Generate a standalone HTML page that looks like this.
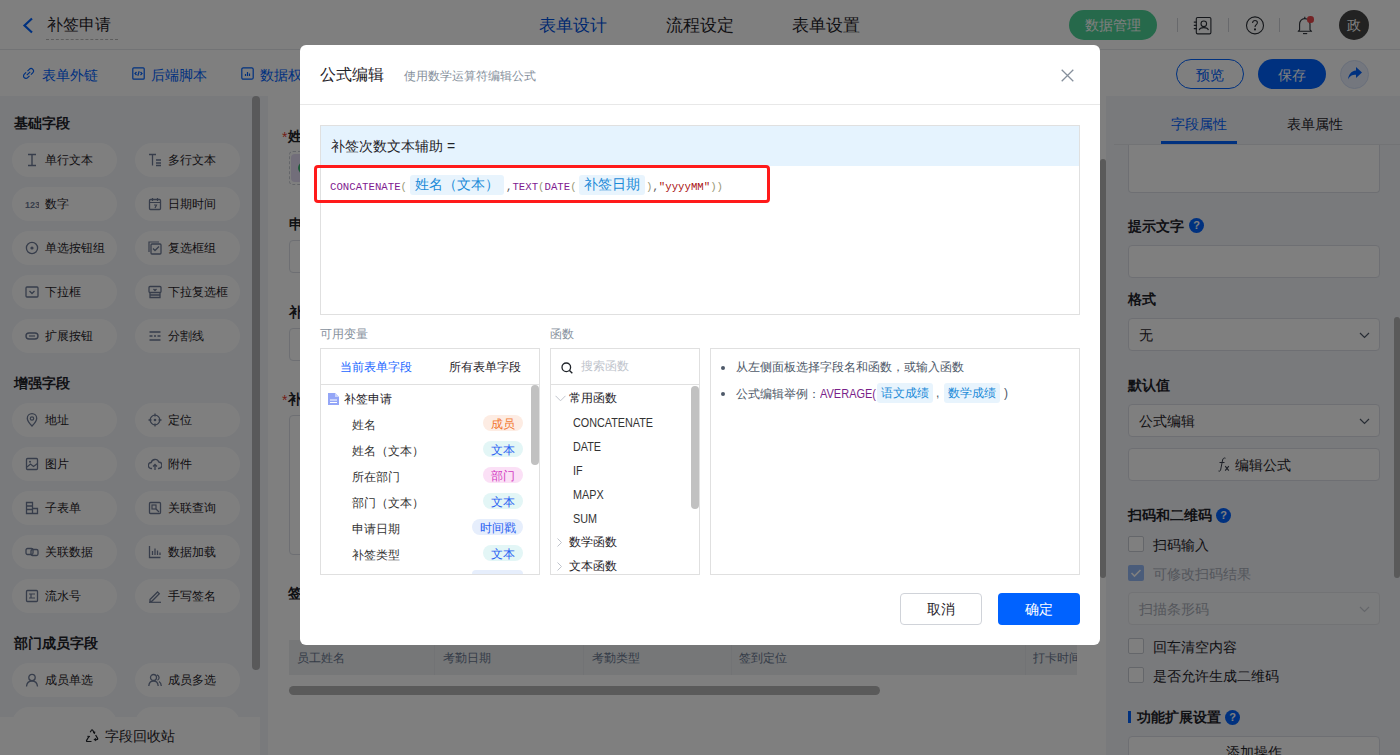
<!DOCTYPE html>
<html><head><meta charset="utf-8">
<style>
*{box-sizing:border-box;margin:0;padding:0}
html,body{width:1400px;height:755px;overflow:hidden;background:#fff;font-family:"Liberation Sans",sans-serif;color:#1f2329}
.a{position:absolute}
.t{position:absolute;white-space:nowrap;line-height:1}
#top{left:0;top:0;width:1400px;height:50px;background:#fff;border-bottom:1px solid #e5e6eb}
#bar{left:0;top:50px;width:1400px;height:46px;background:#fff}
#left{left:0;top:96px;width:268px;height:659px;background:#f2f4f9}
#mid{left:268px;top:96px;width:838px;height:659px;background:#fff}
#right{left:1106px;top:96px;width:294px;height:659px;background:#f2f4f9}
.pill{position:absolute;width:105px;height:34px;border-radius:17px;background:#fff}
.pill span{position:absolute;left:33px;top:10px;font-size:12px;line-height:14px;color:#1f2329}
.pill i{position:absolute;left:12px;top:10px;width:14px;height:14px}
.sec{position:absolute;left:14px;font-size:14px;font-weight:bold;line-height:14px}
#mask{left:0;top:0;width:1400px;height:755px;background:rgba(0,0,0,0.5)}
#modal{left:300px;top:45px;width:800px;height:600px;background:#fff;border-radius:6px}
.code{font-family:"Liberation Mono",monospace;font-size:11.5px;line-height:11px;margin-top:1px;transform:scaleX(0.93);transform-origin:0 0}
.kw{color:#7f1a90}.br{color:#999977}.st{color:#aa1111}.pu{color:#555}
</style></head><body>
<!-- top bar -->
<div id="top" class="a"></div>
<svg class="a" style="left:22px;top:17px" width="12" height="17" viewBox="0 0 12 17"><path d="M10 1.5 L2.5 8.5 L10 15.5" fill="none" stroke="#0062ff" stroke-width="2.2"/></svg>
<div class="t" style="left:47px;top:17px;font-size:16px;color:#1f2329">补签申请</div>
<div class="a" style="left:46px;top:39px;width:72px;border-top:1px dashed #bbb"></div>
<div class="t" style="left:539px;top:18px;font-size:16.6px;color:#0052e0">表单设计</div>
<div class="t" style="left:666px;top:18px;font-size:16.6px">流程设定</div>
<div class="t" style="left:792px;top:18px;font-size:16.6px">表单设置</div>
<div class="a" style="left:1069px;top:10px;width:88px;height:30px;border-radius:15px;background:#4cd296"></div>
<div class="t" style="left:1085px;top:18px;font-size:14px;color:#fff">数据管理</div>
<!-- right header icons -->
<div class="a" style="left:1177px;top:18px;width:1px;height:14px;background:#d0d3d9"></div>
<div class="a" style="left:1228px;top:18px;width:1px;height:14px;background:#d0d3d9"></div>
<div class="a" style="left:1279px;top:18px;width:1px;height:14px;background:#d0d3d9"></div>
<svg class="a" style="left:1192px;top:15px" width="22" height="22" viewBox="0 0 22 22" fill="none" stroke="#2b2f36" stroke-width="1.1"><rect x="4.3" y="2.5" width="14.6" height="16.4" rx="1.3"/><circle cx="11.8" cy="8.8" r="2.8"/><path d="M7.2 15.2 C7.8 11.8 15.8 11.8 16.4 15.2"/><path d="M1.8 7.1h3.2M1.8 10.4h3.2M1.8 13.6h3.2"/></svg>
<svg class="a" style="left:1245px;top:15px" width="20" height="21" viewBox="0 0 20 21" fill="none" stroke="#2b2f36" stroke-width="1.1"><circle cx="10" cy="10.4" r="8.5"/><path d="M7.6 8 C7.6 6.4 8.7 5.5 10 5.5 C11.4 5.5 12.4 6.5 12.4 7.7 C12.4 9.5 10 9.7 10 11.9"/><circle cx="10" cy="14.4" r="0.5" fill="#2b2f36"/></svg>
<svg class="a" style="left:1296px;top:15px" width="18" height="21" viewBox="0 0 18 21" fill="none" stroke="#2b2f36" stroke-width="1.1"><path d="M2.2 16.3 L3.6 14.8 V9.3 C3.6 6 5.9 3.6 8.8 3.6 C11.7 3.6 14 6 14 9.3 V14.8 L15.6 16.3 Z" stroke-linejoin="round"/><path d="M7 18.6 H11.2"/><path d="M8.8 1.8 V3.6"/></svg>
<div class="a" style="left:1307px;top:16px;width:6.5px;height:6.5px;border-radius:50%;background:#e8474a"></div>
<div class="a" style="left:1339px;top:10px;width:30px;height:30px;border-radius:50%;background:#444"></div>
<div class="t" style="left:1347px;top:18px;font-size:14px;color:#fff">政</div>

<div id="bar" class="a"></div>
<svg class="a" style="left:22px;top:67px" width="13" height="13" viewBox="0 0 13 13" fill="none" stroke="#0062ff" stroke-width="1.2"><path d="M5.5 4.2 L7.3 2.4 C8.3 1.4 9.9 1.4 10.8 2.3 C11.7 3.2 11.7 4.8 10.7 5.8 L8.9 7.6"/><path d="M7.5 8.8 L5.7 10.6 C4.7 11.6 3.1 11.6 2.2 10.7 C1.3 9.8 1.3 8.2 2.3 7.2 L4.1 5.4"/><path d="M4.8 8.2 L8.2 4.8"/></svg>
<div class="t" style="left:42px;top:68px;font-size:14px;color:#0062ff">表单外链</div>
<svg class="a" style="left:132px;top:67px" width="13" height="13" viewBox="0 0 13 13" fill="none" stroke="#0062ff" stroke-width="1.2"><rect x="0.8" y="0.8" width="11.4" height="11.4" rx="1"/><path d="M4.5 5 L3 6.5 L4.5 8 M8.5 5 L10 6.5 L8.5 8 M7.2 4.3 L5.8 8.7"/></svg>
<div class="t" style="left:151px;top:68px;font-size:14px;color:#0062ff">后端脚本</div>
<svg class="a" style="left:241px;top:67px" width="13" height="13" viewBox="0 0 13 13" fill="none" stroke="#0062ff" stroke-width="1.2"><rect x="0.8" y="0.8" width="11.4" height="11.4" rx="1.5"/><path d="M4.5 9 V7 M6.5 9 V5 M8.5 9 V6.5"/></svg>
<div class="t" style="left:260px;top:68px;font-size:14px;color:#0062ff">数据权限</div>
<div class="a" style="left:1176px;top:59px;width:68px;height:30px;border-radius:15px;border:1px solid #0062ff;background:#fff"></div>
<div class="t" style="left:1196px;top:68px;font-size:14px;color:#0062ff">预览</div>
<div class="a" style="left:1258px;top:59px;width:68px;height:30px;border-radius:15px;background:#0062ff"></div>
<div class="t" style="left:1278px;top:68px;font-size:14px;color:#fff">保存</div>
<div class="a" style="left:1340px;top:60px;width:29px;height:29px;border-radius:50%;background:#e8effc;border:1px solid #d3def5"></div>
<svg class="a" style="left:1347px;top:66px" width="16" height="15" viewBox="0 0 16 15"><path d="M9 1 L15 6.5 L9 12 V8.8 C5 8.8 2.8 10 1 13.5 C1.5 8.5 4 5 9 4.4 Z" fill="#0062ff"/></svg>

<div id="left" class="a"></div>
<div class="sec" style="top:116px">基础字段</div>
<div class="sec" style="top:376px">增强字段</div>
<div class="sec" style="top:636px">部门成员字段</div>
<div class="pill" style="left:12px;top:143px"><svg class="a" style="left:13px;top:10px" width="14" height="14" viewBox="0 0 14 14"><path d="M3 1.5h8M7 1.5v11M3 12.5h8" stroke="#6e7b96" stroke-width="1.4" fill="none"/></svg><span>单行文本</span></div>
<div class="pill" style="left:135px;top:143px"><svg class="a" style="left:13px;top:10px" width="14" height="14" viewBox="0 0 14 14"><path d="M1 1.5h7M4.5 1.5v11M8 7h5M8 10h5M8 12.5h5" stroke="#6e7b96" stroke-width="1.3" fill="none"/></svg><span>多行文本</span></div>
<div class="pill" style="left:12px;top:187px"><svg class="a" style="left:13px;top:10px" width="14" height="14" viewBox="0 0 14 14"><text x="0" y="11" font-size="9" font-weight="bold" fill="#6e7b96" font-family="Liberation Sans">123</text></svg><span>数字</span></div>
<div class="pill" style="left:135px;top:187px"><svg class="a" style="left:13px;top:10px" width="14" height="14" viewBox="0 0 14 14"><rect x="1.5" y="2.5" width="11" height="10" rx="1" stroke="#6e7b96" stroke-width="1.3" fill="none"/><path d="M1.5 5.5h11M4.5 1v3M9.5 1v3M6 8h2.5L7 11" stroke="#6e7b96" stroke-width="1.2" fill="none"/></svg><span>日期时间</span></div>
<div class="pill" style="left:12px;top:231px"><svg class="a" style="left:13px;top:10px" width="14" height="14" viewBox="0 0 14 14"><circle cx="7" cy="7" r="5.6" stroke="#6e7b96" stroke-width="1.3" fill="none"/><circle cx="7" cy="7" r="1.6" fill="#6e7b96"/></svg><span>单选按钮组</span></div>
<div class="pill" style="left:135px;top:231px"><svg class="a" style="left:13px;top:10px" width="14" height="14" viewBox="0 0 14 14"><path d="M1 11V1h10" stroke="#6e7b96" stroke-width="1.2" fill="none"/><rect x="3" y="3" width="10" height="10" rx="1" stroke="#6e7b96" stroke-width="1.3" fill="none"/><path d="M5 7.5l2 2 4-4" stroke="#6e7b96" stroke-width="1.3" fill="none"/></svg><span>复选框组</span></div>
<div class="pill" style="left:12px;top:275px"><svg class="a" style="left:13px;top:10px" width="14" height="14" viewBox="0 0 14 14"><rect x="1" y="2" width="12" height="10" rx="1" stroke="#6e7b96" stroke-width="1.3" fill="none"/><path d="M4.5 6l2.5 2.5L9.5 6" stroke="#6e7b96" stroke-width="1.3" fill="none"/></svg><span>下拉框</span></div>
<div class="pill" style="left:135px;top:275px"><svg class="a" style="left:13px;top:10px" width="14" height="14" viewBox="0 0 14 14"><rect x="1" y="1.5" width="12" height="6" rx="1" stroke="#6e7b96" stroke-width="1.3" fill="none"/><path d="M2 7.5v5h10v-5M2 10h10M5.5 4l1.5 1.5L8.5 4" stroke="#6e7b96" stroke-width="1.3" fill="none"/></svg><span>下拉复选框</span></div>
<div class="pill" style="left:12px;top:319px"><svg class="a" style="left:13px;top:10px" width="14" height="14" viewBox="0 0 14 14"><rect x="1" y="4" width="12" height="6" rx="3" stroke="#6e7b96" stroke-width="1.4" fill="none"/><path d="M4 7h6" stroke="#6e7b96" stroke-width="1.2"/></svg><span>扩展按钮</span></div>
<div class="pill" style="left:135px;top:319px"><svg class="a" style="left:13px;top:10px" width="14" height="14" viewBox="0 0 14 14"><path d="M1.5 3h11M1.5 7h3M6 7h2M9.5 7h3M1.5 11h11" stroke="#6e7b96" stroke-width="1.3" fill="none"/></svg><span>分割线</span></div>
<div class="pill" style="left:12px;top:403px"><svg class="a" style="left:13px;top:10px" width="14" height="14" viewBox="0 0 14 14"><path d="M7 13C4 9.8 2.3 7.6 2.3 5.4A4.7 4.7 0 0 1 11.7 5.4C11.7 7.6 10 9.8 7 13Z" stroke="#6e7b96" stroke-width="1.3" fill="none"/><circle cx="7" cy="5.5" r="1.7" stroke="#6e7b96" stroke-width="1.2" fill="none"/></svg><span>地址</span></div>
<div class="pill" style="left:135px;top:403px"><svg class="a" style="left:13px;top:10px" width="14" height="14" viewBox="0 0 14 14"><circle cx="7" cy="7" r="4.8" stroke="#6e7b96" stroke-width="1.3" fill="none"/><circle cx="7" cy="7" r="1.3" fill="#6e7b96"/><path d="M7 0.5v3M7 10.5v3M0.5 7h3M10.5 7h3" stroke="#6e7b96" stroke-width="1.3"/></svg><span>定位</span></div>
<div class="pill" style="left:12px;top:447px"><svg class="a" style="left:13px;top:10px" width="14" height="14" viewBox="0 0 14 14"><rect x="1.5" y="1.5" width="11" height="11" rx="1" stroke="#6e7b96" stroke-width="1.3" fill="none"/><path d="M2 10l3.5-3 3 2.5 4-3" stroke="#6e7b96" stroke-width="1.2" fill="none"/><circle cx="5" cy="4.8" r="1" fill="#6e7b96"/></svg><span>图片</span></div>
<div class="pill" style="left:135px;top:447px"><svg class="a" style="left:13px;top:10px" width="14" height="14" viewBox="0 0 14 14"><path d="M4 11.5H3.5A3 3 0 0 1 3.2 5.5 4 4 0 0 1 10.8 5 3 3 0 0 1 10.5 11.5H10" stroke="#6e7b96" stroke-width="1.3" fill="none"/><path d="M7 13V7.5M5 9.5l2-2 2 2" stroke="#6e7b96" stroke-width="1.3" fill="none"/></svg><span>附件</span></div>
<div class="pill" style="left:12px;top:491px"><svg class="a" style="left:13px;top:10px" width="14" height="14" viewBox="0 0 14 14"><path d="M1.5 1.5h6v11h-6zM1.5 5h6M1.5 8.5h6M7.5 7.5h5v5h-5" stroke="#6e7b96" stroke-width="1.3" fill="none"/></svg><span>子表单</span></div>
<div class="pill" style="left:135px;top:491px"><svg class="a" style="left:13px;top:10px" width="14" height="14" viewBox="0 0 14 14"><rect x="1.5" y="1.5" width="11" height="11" rx="1" stroke="#6e7b96" stroke-width="1.3" fill="none"/><rect x="4" y="4" width="4" height="4" stroke="#6e7b96" stroke-width="1.2" fill="none"/><path d="M8 8l3 3" stroke="#6e7b96" stroke-width="1.3"/></svg><span>关联查询</span></div>
<div class="pill" style="left:12px;top:535px"><svg class="a" style="left:13px;top:10px" width="14" height="14" viewBox="0 0 14 14"><rect x="1" y="3.5" width="7" height="6" rx="1.5" stroke="#6e7b96" stroke-width="1.3" fill="none"/><rect x="6" y="4.5" width="7" height="6" rx="1.5" stroke="#6e7b96" stroke-width="1.3" fill="none"/></svg><span>关联数据</span></div>
<div class="pill" style="left:135px;top:535px"><svg class="a" style="left:13px;top:10px" width="14" height="14" viewBox="0 0 14 14"><path d="M1.5 1v11.5h11M4.5 10V6M7 10V3.5M9.5 10V5.5M12 10V7.5" stroke="#6e7b96" stroke-width="1.3" fill="none"/></svg><span>数据加载</span></div>
<div class="pill" style="left:12px;top:579px"><svg class="a" style="left:13px;top:10px" width="14" height="14" viewBox="0 0 14 14"><rect x="1.5" y="1.5" width="11" height="11" rx="1" stroke="#6e7b96" stroke-width="1.3" fill="none"/><path d="M4 5h6M4 9h6M6 5v4" stroke="#6e7b96" stroke-width="1.2" fill="none"/></svg><span>流水号</span></div>
<div class="pill" style="left:135px;top:579px"><svg class="a" style="left:13px;top:10px" width="14" height="14" viewBox="0 0 14 14"><path d="M2 10.5L9.5 3l1.8 1.8L3.8 12.3H2z" stroke="#6e7b96" stroke-width="1.3" fill="none"/><path d="M1 13.3h12" stroke="#6e7b96" stroke-width="1.2"/></svg><span>手写签名</span></div>
<div class="pill" style="left:12px;top:663px"><svg class="a" style="left:13px;top:10px" width="14" height="14" viewBox="0 0 14 14"><circle cx="7" cy="4.5" r="3.2" stroke="#6e7b96" stroke-width="1.3" fill="none"/><path d="M1.5 13.5C1.8 9.8 4 8 7 8s5.2 1.8 5.5 5.5" stroke="#6e7b96" stroke-width="1.3" fill="none"/></svg><span>成员单选</span></div>
<div class="pill" style="left:135px;top:663px"><svg class="a" style="left:13px;top:10px" width="14" height="14" viewBox="0 0 14 14"><circle cx="5.5" cy="4.5" r="3" stroke="#6e7b96" stroke-width="1.3" fill="none"/><path d="M0.8 13C1 9.8 3 8 5.5 8S10 9.8 10.2 13M9 1.8A3 3 0 0 1 9.5 7.3M11 8.5C12.3 9.3 13.2 10.8 13.3 13" stroke="#6e7b96" stroke-width="1.3" fill="none"/></svg><span>成员多选</span></div>
<div class="pill" style="left:12px;top:707px"><svg class="a" style="left:13px;top:10px" width="14" height="14" viewBox="0 0 14 14"><circle cx="7" cy="4.5" r="3.2" stroke="#6e7b96" stroke-width="1.3" fill="none"/><path d="M1.5 13.5C1.8 9.8 4 8 7 8s5.2 1.8 5.5 5.5" stroke="#6e7b96" stroke-width="1.3" fill="none"/></svg><span>部门单选</span></div>
<div class="pill" style="left:135px;top:707px"><svg class="a" style="left:13px;top:10px" width="14" height="14" viewBox="0 0 14 14"><circle cx="5.5" cy="4.5" r="3" stroke="#6e7b96" stroke-width="1.3" fill="none"/><path d="M0.8 13C1 9.8 3 8 5.5 8S10 9.8 10.2 13M9 1.8A3 3 0 0 1 9.5 7.3M11 8.5C12.3 9.3 13.2 10.8 13.3 13" stroke="#6e7b96" stroke-width="1.3" fill="none"/></svg><span>部门多选</span></div>
<div class="a" style="left:252px;top:96px;width:8px;height:574px;border-radius:4px;background:#b3b3b5"></div>
<div class="a" style="left:0;top:717px;width:260px;height:38px;background:#fff"></div>
<svg class="a" style="left:85px;top:729px" width="14" height="14" viewBox="0 0 14 14" fill="none" stroke="#1f2329" stroke-width="1.2"><path d="M5.2 3.2L6.4 1.3c.3-.5 1-.5 1.3 0l1.6 2.6M10.6 6l2 3.4c.3.5 0 1.1-.6 1.1H9.5M6.5 12.5H2.2c-.6 0-.9-.6-.6-1.1L3.6 8"/><path d="M8.3 3.2l1.2.9.3-1.5M11.2 11.7l-1.7-1.2 1.5-1M2.6 6.8l1 1.2 1.3-.7"/></svg>
<div class="t" style="left:105px;top:729px;font-size:14px">字段回收站</div>
<div id="mid" class="a"></div>

<!-- middle form -->
<div class="t" style="left:282px;top:130px;font-size:14px;color:#e8402e">*</div><div class="t" style="left:288px;top:129px;font-size:14px;font-weight:bold">姓名</div>
<div class="a" style="left:289px;top:151px;width:300px;height:34px;border:1px dashed #c9cdd4;border-radius:4px"></div>
<div class="a" style="left:291px;top:154px;width:120px;height:28px;background:#e4dcf4;border-radius:4px"></div>
<div class="a" style="left:298px;top:162px;width:12px;height:12px;border-radius:50%;background:#3cb371"></div>
<div class="t" style="left:289px;top:217px;font-size:14px;font-weight:bold">申请日期</div>
<div class="a" style="left:289px;top:240px;width:788px;height:33px;border:1px solid #dcdfe6;border-radius:4px"></div>
<div class="t" style="left:289px;top:305px;font-size:14px;font-weight:bold">补签类型</div>
<div class="a" style="left:289px;top:328px;width:788px;height:33px;border:1px solid #dcdfe6;border-radius:4px"></div>
<div class="t" style="left:282px;top:393px;font-size:14px;color:#e8402e">*</div><div class="t" style="left:288px;top:392px;font-size:14px;font-weight:bold">补签原因</div>
<div class="a" style="left:289px;top:415px;width:788px;height:140px;border:1px solid #dcdfe6;border-radius:4px"></div>
<div class="t" style="left:288px;top:586px;font-size:14px;font-weight:bold">签卡记录</div>
<div class="a" style="left:289px;top:640px;width:788px;height:35px;background:#eceef1"></div>
<div class="a" style="left:434px;top:640px;width:1px;height:35px;background:#e5e6eb"></div>
<div class="a" style="left:583px;top:640px;width:1px;height:35px;background:#e5e6eb"></div>
<div class="a" style="left:731px;top:640px;width:1px;height:35px;background:#e5e6eb"></div>
<div class="a" style="left:1025px;top:640px;width:1px;height:35px;background:#e5e6eb"></div>
<div class="t" style="left:297px;top:652px;font-size:12px;color:#6a7890">员工姓名</div>
<div class="t" style="left:443px;top:652px;font-size:12px;color:#6a7890">考勤日期</div>
<div class="t" style="left:592px;top:652px;font-size:12px;color:#6a7890">考勤类型</div>
<div class="t" style="left:739px;top:652px;font-size:12px;color:#6a7890">签到定位</div>
<div class="t" style="left:1033px;top:652px;font-size:12px;color:#6a7890;width:44px;overflow:hidden">打卡时间</div>
<div class="a" style="left:289px;top:686px;width:591px;height:9px;border-radius:5px;background:#b4b4b4"></div>
<div class="a" style="left:1100px;top:159px;width:6px;height:419px;border-radius:3px;background:#b4b4b4"></div>

<div id="right" class="a"></div>

<!-- right panel -->
<div class="t" style="left:1171px;top:117px;font-size:14px;color:#0062ff">字段属性</div>
<div class="t" style="left:1287px;top:117px;font-size:14px">表单属性</div>
<div class="a" style="left:1114px;top:144px;width:286px;height:1px;background:#e5e6eb"></div>
<div class="a" style="left:1161px;top:141px;width:76px;height:3px;background:#0062ff"></div>
<div class="a" style="left:1128px;top:145px;width:252px;height:48px;border:1px solid #dcdfe6;border-top:none;border-radius:0 0 4px 4px;background:#fff"></div>
<div class="t" style="left:1128px;top:219px;font-size:14px;font-weight:bold">提示文字</div>
<div class="a" style="left:1189px;top:218px;width:15px;height:15px;border-radius:50%;background:#0062ff;color:#fff;font-size:11px;font-weight:bold;line-height:15px;text-align:center">?</div>
<div class="a" style="left:1128px;top:245px;width:252px;height:33px;border:1px solid #dcdfe6;border-radius:4px;background:#fff"></div>
<div class="t" style="left:1128px;top:292px;font-size:14px;font-weight:bold">格式</div>
<div class="a" style="left:1128px;top:318px;width:252px;height:33px;border:1px solid #dcdfe6;border-radius:4px;background:#fff"></div>
<div class="t" style="left:1139px;top:328px;font-size:14px">无</div>
<svg class="a" style="left:1359px;top:332px" width="11" height="7" viewBox="0 0 11 7"><path d="M1 1l4.5 4.5L10 1" fill="none" stroke="#4e5969" stroke-width="1.2"/></svg>
<div class="t" style="left:1128px;top:378px;font-size:14px;font-weight:bold">默认值</div>
<div class="a" style="left:1128px;top:404px;width:252px;height:33px;border:1px solid #dcdfe6;border-radius:4px;background:#fff"></div>
<div class="t" style="left:1139px;top:414px;font-size:14px">公式编辑</div>
<svg class="a" style="left:1359px;top:418px" width="11" height="7" viewBox="0 0 11 7"><path d="M1 1l4.5 4.5L10 1" fill="none" stroke="#4e5969" stroke-width="1.2"/></svg>
<div class="a" style="left:1128px;top:448px;width:252px;height:33px;border:1px solid #dcdfe6;border-radius:4px;background:#fff"></div>
<svg class="a" style="left:1217px;top:457px" width="14" height="15" viewBox="0 0 14 15" fill="none" stroke="#3d4350" stroke-width="1"><path d="M8.5 1.2 C7.2 0.6 6 1.2 5.6 3 L3.6 13 C3.2 14.2 2.4 14.4 1.5 14"/><path d="M2.5 5.5 H7.5"/><path d="M8.2 9.2 L11.8 13.6 M11.8 9.2 L8.2 13.6" stroke-width="1.1"/></svg>
<div class="t" style="left:1235px;top:458px;font-size:14px">编辑公式</div>
<div class="t" style="left:1128px;top:508px;font-size:14px;font-weight:bold">扫码和二维码</div>
<div class="a" style="left:1216px;top:508px;width:15px;height:15px;border-radius:50%;background:#0062ff;color:#fff;font-size:11px;font-weight:bold;line-height:15px;text-align:center">?</div>
<div class="a" style="left:1128px;top:536px;width:16px;height:16px;border:1px solid #c9cdd4;border-radius:2px;background:#fff"></div>
<div class="t" style="left:1153px;top:538px;font-size:14.3px">扫码输入</div>
<div class="a" style="left:1128px;top:565px;width:16px;height:16px;border-radius:2px;background:#94b8f5"></div>
<svg class="a" style="left:1128px;top:565px" width="16" height="16" viewBox="0 0 16 16"><path d="M3.5 8l3 3 6-6" fill="none" stroke="#fff" stroke-width="1.6"/></svg>
<div class="t" style="left:1153px;top:567px;font-size:14.3px;color:#a9aeb8">可修改扫码结果</div>
<div class="a" style="left:1128px;top:592px;width:252px;height:33px;border:1px solid #e5e6eb;border-radius:4px;background:#f7f8fa"></div>
<div class="t" style="left:1139px;top:602px;font-size:14.3px;color:#a9aeb8">扫描条形码</div>
<svg class="a" style="left:1359px;top:606px" width="11" height="7" viewBox="0 0 11 7"><path d="M1 1l4.5 4.5L10 1" fill="none" stroke="#c9cdd4" stroke-width="1.2"/></svg>
<div class="a" style="left:1128px;top:638px;width:16px;height:16px;border:1px solid #c9cdd4;border-radius:2px;background:#fff"></div>
<div class="t" style="left:1153px;top:640px;font-size:14.3px">回车清空内容</div>
<div class="a" style="left:1128px;top:667px;width:16px;height:16px;border:1px solid #c9cdd4;border-radius:2px;background:#fff"></div>
<div class="t" style="left:1153px;top:669px;font-size:14.3px">是否允许生成二维码</div>
<div class="a" style="left:1128px;top:711px;width:3px;height:12px;background:#0062ff"></div>
<div class="t" style="left:1137px;top:710px;font-size:14px;font-weight:bold">功能扩展设置</div>
<div class="a" style="left:1225px;top:710px;width:15px;height:15px;border-radius:50%;background:#0062ff;color:#fff;font-size:11px;font-weight:bold;line-height:15px;text-align:center">?</div>
<div class="a" style="left:1128px;top:736px;width:252px;height:33px;border:1px solid #dcdfe6;border-radius:4px;background:#fff"></div>
<div class="t" style="left:1226px;top:745px;font-size:14px">添加操作</div>
<div class="a" style="left:1394px;top:317px;width:6px;height:261px;border-radius:3px;background:#b4b4b4"></div>


<div id="mask" class="a"></div>

<div id="modal" class="a">
</div>
<div class="t" style="left:320px;top:67px;font-size:16px">公式编辑</div>
<div class="t" style="left:404px;top:70px;font-size:12px;color:#86909c">使用数学运算符编辑公式</div>
<svg class="a" style="left:1061px;top:69px" width="13" height="13" viewBox="0 0 13 13"><path d="M0.7 0.7l11.6 11.6M12.3 0.7L0.7 12.3" stroke="#86909c" stroke-width="1.3"/></svg>
<div class="a" style="left:300px;top:104px;width:800px;height:1px;background:#e8e8e8"></div>
<!-- formula box -->
<div class="a" style="left:320px;top:125px;width:760px;height:190px;border:1px solid #e0e0e0"></div>
<div class="a" style="left:321px;top:126px;width:758px;height:40px;background:#e5f3fe"></div>
<div class="t" style="left:331px;top:139px;font-size:14px;color:#1f2329">补签次数文本辅助 =</div>
<div class="a" style="left:314px;top:165px;width:456px;height:38px;border:3px solid #ff1a1a;border-radius:4px"></div>
<div class="a" style="left:410px;top:175px;width:94px;height:20px;background:#e8f4fd;border-radius:3px"></div>
<div class="a" style="left:579px;top:175px;width:66px;height:20px;background:#e8f4fd;border-radius:3px"></div>
<div class="t code" style="left:330px;top:180px"><span class="kw">CONCATENATE</span><span class="br">(</span></div>
<div class="t" style="left:415px;top:177px;font-size:14px;color:#1a8ad8">姓名（文本）</div>
<div class="t code" style="left:506px;top:180px"><span class="pu">,</span><span class="kw">TEXT</span><span class="br">(</span><span class="kw">DATE</span><span class="br">(</span></div>
<div class="t" style="left:584px;top:177px;font-size:14px;color:#1a8ad8">补签日期</div>
<div class="t code" style="left:646px;top:180px"><span class="br">)</span><span class="pu">,</span><span class="st">"yyyyMM"</span><span class="br">))</span></div>
<!-- lower panels -->
<div class="t" style="left:320px;top:328px;font-size:12px;color:#86909c">可用变量</div>
<div class="t" style="left:550px;top:328px;font-size:12px;color:#86909c">函数</div>
<div class="a" style="left:320px;top:348px;width:220px;height:227px;border:1px solid #e0e0e0"></div>
<div class="a" style="left:321px;top:384px;width:218px;height:1px;background:#e0e0e0"></div>
<div class="t" style="left:340px;top:361px;font-size:12px;color:#1a66ff">当前表单字段</div>
<div class="t" style="left:449px;top:361px;font-size:12px">所有表单字段</div>
<svg class="a" style="left:328px;top:393px" width="11" height="12" viewBox="0 0 11 12"><path d="M0 0h7l4 4v8H0z" fill="#94a6f7"/><path d="M7 0v4h4" fill="#c9d3fb"/><path d="M2 7h7M2 9.5h7" stroke="#fff" stroke-width="1"/></svg>
<div class="t" style="left:344px;top:393px;font-size:12px">补签申请</div>
<div class="t" style="left:352px;top:419px;font-size:12px;color:#333">姓名</div><div class="a" style="left:483px;top:415px;width:40px;height:16px;border-radius:8px;padding-top:1px;background:#fdece3;color:#f2772f;font-size:12px;line-height:16px;text-align:center">成员</div><div class="t" style="left:352px;top:445px;font-size:12px;color:#333">姓名（文本）</div><div class="a" style="left:483px;top:441px;width:40px;height:16px;border-radius:8px;padding-top:1px;background:#e3f6f6;color:#2a62f2;font-size:12px;line-height:16px;text-align:center">文本</div><div class="t" style="left:352px;top:471px;font-size:12px;color:#333">所在部门</div><div class="a" style="left:483px;top:467px;width:40px;height:16px;border-radius:8px;padding-top:1px;background:#fbe0f6;color:#d33cc2;font-size:12px;line-height:16px;text-align:center">部门</div><div class="t" style="left:352px;top:497px;font-size:12px;color:#333">部门（文本）</div><div class="a" style="left:483px;top:493px;width:40px;height:16px;border-radius:8px;padding-top:1px;background:#e3f6f6;color:#2a62f2;font-size:12px;line-height:16px;text-align:center">文本</div><div class="t" style="left:352px;top:523px;font-size:12px;color:#333">申请日期</div><div class="a" style="left:472px;top:519px;width:51px;height:16px;border-radius:8px;padding-top:1px;background:#e6eefc;color:#2a62f2;font-size:12px;line-height:16px;text-align:center">时间戳</div><div class="t" style="left:352px;top:549px;font-size:12px;color:#333">补签类型</div><div class="a" style="left:483px;top:545px;width:40px;height:16px;border-radius:8px;padding-top:1px;background:#e3f6f6;color:#2a62f2;font-size:12px;line-height:16px;text-align:center">文本</div><div class="a" style="left:472px;top:570px;width:51px;height:4px;border-radius:8px 8px 0 0;background:#e6eefc"></div>
<div class="a" style="left:531px;top:385px;width:8px;height:80px;border-radius:4px;background:#c1c1c1"></div>
<div class="a" style="left:550px;top:348px;width:150px;height:227px;border:1px solid #e0e0e0"></div>
<div class="a" style="left:551px;top:384px;width:148px;height:1px;background:#e0e0e0"></div>
<svg class="a" style="left:561px;top:362px" width="12" height="12" viewBox="0 0 12 12"><circle cx="5.3" cy="5.3" r="4.3" fill="none" stroke="#1f2329" stroke-width="1.3"/><path d="M8.5 8.5l2.8 2.8" stroke="#1f2329" stroke-width="1.4"/></svg>
<div class="t" style="left:581px;top:360px;font-size:12px;color:#c0c4cc">搜索函数</div>
<svg class="a" style="left:555px;top:395px" width="11" height="7" viewBox="0 0 11 7"><path d="M0.5 0.8l5 5 5-5" fill="none" stroke="#c0c4cc" stroke-width="1"/></svg>
<div class="t" style="left:569px;top:392px;font-size:12px">常用函数</div>
<div class="t" style="left:573px;top:416px;font-size:12px;transform:scaleX(0.9);transform-origin:0 0;margin-top:1px;color:#333">CONCATENATE</div><div class="t" style="left:573px;top:440px;font-size:12px;transform:scaleX(0.9);transform-origin:0 0;margin-top:1px;color:#333">DATE</div><div class="t" style="left:573px;top:464px;font-size:12px;transform:scaleX(0.9);transform-origin:0 0;margin-top:1px;color:#333">IF</div><div class="t" style="left:573px;top:488px;font-size:12px;transform:scaleX(0.9);transform-origin:0 0;margin-top:1px;color:#333">MAPX</div><div class="t" style="left:573px;top:512px;font-size:12px;transform:scaleX(0.9);transform-origin:0 0;margin-top:1px;color:#333">SUM</div>
<svg class="a" style="left:557px;top:538px" width="5" height="9" viewBox="0 0 5 9"><path d="M0.5 0.5l4 4-4 4" fill="none" stroke="#c0c4cc" stroke-width="1"/></svg>
<div class="t" style="left:569px;top:536px;font-size:12px">数学函数</div>
<svg class="a" style="left:557px;top:562px" width="5" height="9" viewBox="0 0 5 9"><path d="M0.5 0.5l4 4-4 4" fill="none" stroke="#c0c4cc" stroke-width="1"/></svg>
<div class="t" style="left:569px;top:560px;font-size:12px">文本函数</div>
<div class="a" style="left:691px;top:386px;width:8px;height:123px;border-radius:4px;background:#c1c1c1"></div>
<div class="a" style="left:710px;top:348px;width:370px;height:227px;border:1px solid #e0e0e0"></div>
<div class="a" style="left:721px;top:366px;width:4px;height:4px;border-radius:50%;background:#4e5969"></div>
<div class="t" style="left:736px;top:361px;font-size:12px;color:#4e5969">从左侧面板选择字段名和函数，或输入函数</div>
<div class="a" style="left:721px;top:392px;width:4px;height:4px;border-radius:50%;background:#4e5969"></div>
<div class="t" style="left:736px;top:388px;font-size:12px;color:#4e5969">公式编辑举例：</div>
<div class="t" style="left:820px;top:388px;font-size:12.5px;color:#7a1f8a;transform:scaleX(0.88);transform-origin:0 0">AVERAGE(</div>
<div class="a" style="left:877px;top:383px;width:56px;height:20px;border-radius:3px;background:#e8f4fd"></div>
<div class="t" style="left:881px;top:387px;font-size:12px;color:#1a8ad8">语文成绩</div>
<div class="t" style="left:936px;top:387px;font-size:12px;color:#4e5969">,</div>
<div class="a" style="left:944px;top:383px;width:56px;height:20px;border-radius:3px;background:#e8f4fd"></div>
<div class="t" style="left:948px;top:387px;font-size:12px;color:#1a8ad8">数学成绩</div>
<div class="t" style="left:1004px;top:387px;font-size:12px;color:#4e5969">)</div>
<!-- footer -->
<div class="a" style="left:900px;top:593px;width:82px;height:32px;border:1px solid #d0d3d9;border-radius:4px;background:#fff"></div>
<div class="t" style="left:927px;top:602px;font-size:14px">取消</div>
<div class="a" style="left:998px;top:593px;width:82px;height:32px;border-radius:4px;background:#0062ff"></div>
<div class="t" style="left:1025px;top:602px;font-size:14px;color:#fff">确定</div>

</body></html>
